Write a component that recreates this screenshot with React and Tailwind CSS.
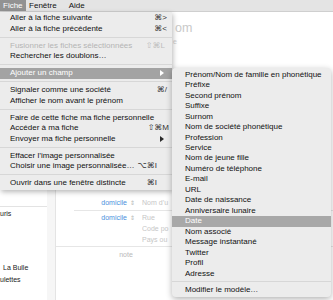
import React from 'react';

const mainItems = [
  { t: 'Aller à la fiche suivante', k: '⌘>' },
  { t: 'Aller à la fiche précédente', k: '⌘<' },
  'sep',
  { t: 'Fusionner les fiches sélectionnées', k: '⇧⌘L', disabled: true, kx: 'mr-[2px]' },
  { t: 'Rechercher les doublons…' },
  'sep',
  { t: 'Ajouter un champ', sub: true, active: true },
  'sep',
  { t: 'Signaler comme une société', k: '⌘/' },
  { t: 'Afficher le nom avant le prénom' },
  'sep',
  { t: 'Faire de cette fiche ma fiche personnelle' },
  { t: 'Accéder à ma fiche', k: '⇧⌘M', kx: '-mr-[2px]' },
  { t: 'Envoyer ma fiche personnelle', sub: true },
  'sep',
  { t: 'Effacer l’image personnalisée' },
  { t: 'Choisir une image personnalisée…', k: '⌥⌘I', kx: 'mr-[10px]' },
  'sep',
  { t: 'Ouvrir dans une fenêtre distincte', k: '⌘I', kx: 'mr-[10px]' },
];

const fields = [
  'Prénom/Nom de famille en phonétique',
  'Préfixe',
  'Second prénom',
  'Suffixe',
  'Surnom',
  'Nom de société phonétique',
  'Profession',
  'Service',
  'Nom de jeune fille',
  'Numéro de téléphone',
  'E-mail',
  'URL',
  'Date de naissance',
  'Anniversaire lunaire',
  'Date',
  'Nom associé',
  'Message instantané',
  'Twitter',
  'Profil',
  'Adresse',
];

function Arrow({ white }) {
  return (
    <svg width="4" height="6" viewBox="0 0 4 6" className="mr-[3px]">
      <polygon points="0,0 4,3 0,6" fill={white ? '#ffffff' : '#2a2a2a'} />
    </svg>
  );
}

function MainMenu() {
  return (
    <div className="absolute left-0 top-[12px] w-[172px] bg-[#ececec] pt-[1px] pb-[1px] shadow-[1px_2px_5px_rgba(0,0,0,0.28)]">
      {mainItems.map((it, i) =>
        it === 'sep' ? (
          <div key={i} className="h-[6.5px] flex items-center">
            <div className="h-px w-full bg-[#d7d7d7]" />
          </div>
        ) : (
          <div
            key={i}
            className={`h-[10.5px] flex items-center justify-between pl-[10px] pr-[5px] ${
              it.active ? 'bg-[#a3a3a3] text-white' : it.disabled ? 'text-[#b4b4b4]' : 'text-[#111]'
            }`}
          >
            <span className="whitespace-nowrap leading-none">{it.t}</span>
            {it.k && (
              <span className={`leading-none whitespace-nowrap ${it.disabled ? 'text-[#bdbdbd]' : 'text-[#333]'} ${it.kx || ''}`}>
                {it.k}
              </span>
            )}
            {it.sub && <Arrow white={it.active} />}
          </div>
        )
      )}
    </div>
  );
}

function SubMenu() {
  return (
    <div className="absolute left-[172px] top-[68px] w-[159px] rounded-[4px] bg-[#ececec] pt-[1.5px] pb-[2px] shadow-[0_2px_6px_rgba(0,0,0,0.3)]">
      {fields.map((f) => (
        <div
          key={f}
          className={`h-[10.47px] flex items-center pl-[13px] whitespace-nowrap ${
            f === 'Date' ? 'bg-[#a8a8a8] text-white' : 'text-[#111]'
          }`}
        >
          <span className="leading-none">{f}</span>
        </div>
      ))}
      <div className="h-[5.5px] flex items-center">
        <div className="h-px w-full bg-[#d7d7d7]" />
      </div>
      <div className="h-[10.5px] flex items-center pl-[13px] text-[#111]">
        <span className="leading-none">Modifier le modèle…</span>
      </div>
    </div>
  );
}

export default function App() {
  return (
    <div className="relative w-[333px] h-[300px] overflow-hidden bg-white font-['Liberation_Sans','DejaVu_Sans',sans-serif] text-[8px]">
      {/* menu bar */}
      <div className="h-[12px] flex items-center bg-[#e4e4e4] border-b border-[#cfcfcf]">
        <span className="h-full flex items-center px-[3px] bg-[#929292] text-white">Fiche</span>
        <span className="ml-[3.5px] text-[#111]">Fenêtre</span>
        <span className="ml-[12px] text-[#111]">Aide</span>
      </div>

      {/* window behind the menus */}
      <div className="flex h-[288px]">
        <div className="w-[47px] flex flex-col text-[7px] text-[#222]">
          <div className="h-[183px]" />
          <div className="h-[12px] border-b border-[#e3e3e3]" />
          <div className="h-[14px] flex items-center whitespace-nowrap">uris</div>
          <div className="h-[41px]" />
          <div className="h-[12px] flex items-center pl-[3px] whitespace-nowrap">La Bulle</div>
          <div className="h-[12px] flex items-center whitespace-nowrap">ulettes</div>
        </div>
        <div className="w-[9px] bg-[#f6f6f6] border-r border-[#e4e4e4]" />
        <div className="flex-1 flex flex-col text-[7px]">
          <div className="h-[184px]">
            <div className="ml-[119px] pt-[10px] text-[12.5px] text-[#c9c9c9] leading-none whitespace-nowrap">om</div>
            <div className="pl-[117px] pt-[3px] text-[7px] text-[#cfcfcf] leading-none">e</div>
          </div>
          <div className="h-[15px] flex flex-col">
            <div className="flex-1 flex items-center">
              <span className="w-[71px] text-right text-[#4a8fdc]">domicile</span>
              <span className="ml-[3px] text-[6px] text-[#b5b5b5]">⇕</span>
              <span className="ml-[7px] w-[29px] overflow-hidden text-[#c6c6c6] whitespace-nowrap">Nom d’u</span>
            </div>
            <div className="ml-[18px] h-px bg-[#e6e6e6]" />
          </div>
          <div className="h-[36px] flex border-b border-[#e6e6e6] pt-[1.5px]">
            <div className="flex items-start">
              <span className="w-[71px] h-[11px] flex items-center justify-end text-[#4a8fdc]">domicile</span>
              <span className="ml-[3px] h-[11px] flex items-center text-[6px] text-[#b5b5b5]">⇕</span>
            </div>
            <div className="ml-[7px] w-[29px] overflow-hidden flex flex-col text-[#c6c6c6] whitespace-nowrap">
              <span className="h-[11px] flex items-center">Rue</span>
              <span className="h-[11px] flex items-center">Code po</span>
              <span className="h-[11px] flex items-center">Pays ou</span>
            </div>
          </div>
          <div className="h-[16px] w-[140px] flex items-center justify-center text-[#b9b9b9]">note</div>
        </div>
      </div>

      <MainMenu />
      <SubMenu />
    </div>
  );
}
